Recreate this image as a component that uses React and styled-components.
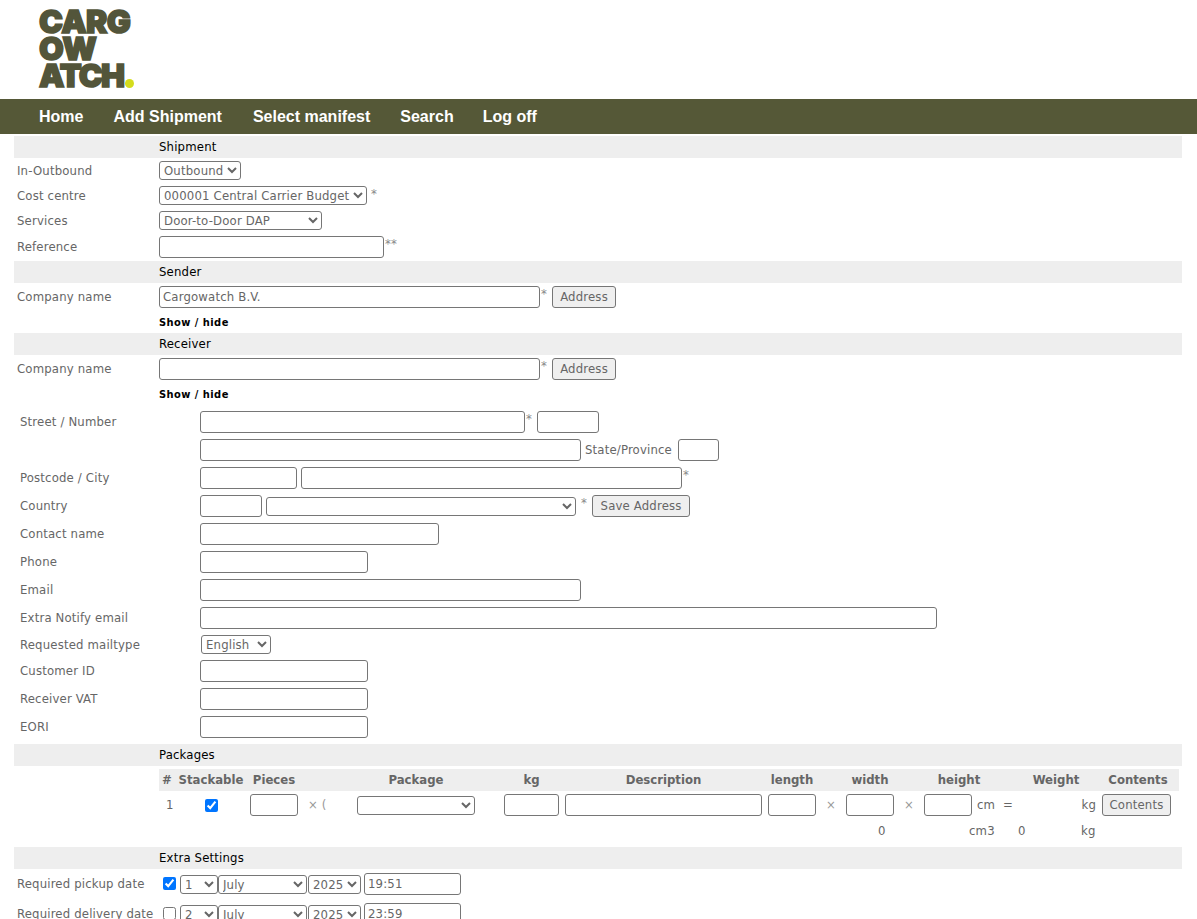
import React from "react";
import styled, { createGlobalStyle } from "styled-components";

const Global = createGlobalStyle`
  html, body { margin: 0; padding: 0; background: #fff; }
  body { font-family: "DejaVu Sans Condensed", "DejaVu Sans", Tahoma, sans-serif; font-stretch: condensed; font-size: 13px; letter-spacing: 0.17px; color: #666; }
  #root { height: 919px; overflow: hidden; }
`;

const Header = styled.header`
  height: 99px;
  box-sizing: border-box;
  padding: 8px 0 0 39px;
`;
const Logo = styled.div`
  font-family: Inter, "Liberation Sans", sans-serif;
  font-weight: 900;
  font-stretch: normal;
  font-size: 32px;
  line-height: 27px;
  color: #53553a;
  -webkit-text-stroke: 1.6px #53553a;
`;
const LogoLine = styled.div`
  height: 27px;
  display: flex;
  align-items: center;
  letter-spacing: ${(p) => p.$ls}px;
`;
const LogoDot = styled.span`
  flex: none;
  width: 9px;
  height: 9px;
  border-radius: 50%;
  background: #d4dc1c;
  margin: 16px 0 0 2px;
`;
const Nav = styled.nav`
  height: 35px;
  background: #555837;
  display: flex;
  align-items: center;
  padding-left: 24px;
  font-family: "Liberation Sans", Arial, sans-serif;
  font-stretch: normal;
  letter-spacing: 0;
`;
const NavLink = styled.a`
  padding: 0 15px;
  color: #fff;
  font-size: 16px;
  font-weight: 700;
  &:nth-child(3) { margin-left: 1px; }
  &:nth-child(4) { margin-right: -1px; }
`;
const Main = styled.main`
  margin: 2px 15px 0 14px;
`;
const Bar = styled.div`
  box-sizing: border-box;
  height: 22px;
  background: #eee;
  color: #000;
  display: flex;
  align-items: center;
  padding: 0 0 2px 145px;
`;
const Label = styled.div`
  width: 142px;
  flex: none;
  white-space: nowrap;
`;
const Row = styled.div`
  display: flex;
  align-items: center;
  height: ${(p) => p.$h || 28}px;
  padding-left: 3px;
  ${Label} { margin-top: ${(p) => (p.$h === 25 ? 0 : -2)}px; }
`;
const Fields = styled.div`
  display: flex;
  align-items: center;
`;
const Nested = styled.div`
  padding: 3px 0 3px 3px;
`;
const NestedLabel = styled(Label)`
  width: 180px;
`;
const Input = styled.input`
  box-sizing: border-box;
  width: ${(p) => p.$w}px;
  height: 22px;
  margin: 0 ${(p) => p.$mr || 0}px 0 ${(p) => p.$ml || 0}px;
  padding: 0 3px 2px;
  border: 1px solid #767676;
  border-radius: 3px;
  background: #fff;
  color: #666;
  font: inherit;
  font-stretch: condensed;
  letter-spacing: inherit;
  outline: none;
`;
const Select = styled.select`
  box-sizing: border-box;
  width: ${(p) => p.$w}px;
  height: 19px;
  margin: 0 ${(p) => p.$mr || 0}px 0 ${(p) => p.$ml || 0}px;
  padding: 0;
  border: 1px solid #767676;
  border-radius: 3px;
  background: #fff;
  color: #666;
  font: inherit;
  font-stretch: condensed;
  letter-spacing: inherit;
`;
const Button = styled.button`
  box-sizing: border-box;
  height: 22px;
  width: ${(p) => p.$w}px;
  margin-left: ${(p) => p.$ml || 0}px;
  padding: 0 0 2px;
  border: 1px solid #767676;
  border-radius: 3px;
  background: #efefef;
  color: #666;
  font: inherit;
  font-stretch: condensed;
  letter-spacing: inherit;
`;
const Req = styled.span`
  font-size: 13px;
  color: #888;
  align-self: flex-start;
  margin: ${(p) => p.$mt ?? 0}px ${(p) => p.$mr || 0}px 0 ${(p) => p.$ml || 0}px;
  line-height: 16px;
`;
const Text = styled.span`
  margin: -2px ${(p) => p.$mr || 0}px 0 ${(p) => p.$ml || 0}px;
  white-space: nowrap;
`;
const Toggle = styled.a`
  margin-left: 142px;
  color: #000;
  font-size: 11px;
  font-weight: 700;
  letter-spacing: 0.45px;
`;
const Table = styled.div`
  margin: 3px 0 0 145px;
  padding-bottom: 6px;
  width: 1020px;
`;
const HeadRow = styled.div`
  box-sizing: border-box;
  display: flex;
  height: 22px;
  padding-bottom: 2px;
  align-items: center;
  background: #eee;
  font-weight: 700;
  letter-spacing: 0;
`;
const BodyRow = styled.div`
  display: flex;
  height: ${(p) => p.$h}px;
  align-items: center;
`;
const Cell = styled.div`
  box-sizing: border-box;
  flex: none;
  width: ${(p) => p.$w}px;
  padding: 0 ${(p) => p.$pr || 0}px 0 ${(p) => p.$pl || 0}px;
  margin-top: ${(p) => (p.$up ? -2 : 0)}px;
  color: ${(p) => (p.$muted ? "#999" : "inherit")};
  white-space: nowrap;
  display: flex;
  align-items: center;
  justify-content: ${(p) => (p.$a === "left" ? "flex-start" : p.$a === "right" ? "flex-end" : "center")};
`;
const Check = styled.input.attrs({ type: "checkbox" })`
  width: 13px;
  height: 13px;
  margin: ${(p) => p.$m || 0};
  accent-color: #0075ff;
`;

const nav = ["Home", "Add Shipment", "Select manifest", "Search", "Log off"];
const noop = () => {};

export default function App() {
  return (
    <>
      <Global />
      <Header>
        <Logo>
          <LogoLine $ls={-0.6}>CARG</LogoLine>
          <LogoLine $ls={0}>OW</LogoLine>
          <LogoLine $ls={-1.8}>ATCH<LogoDot /></LogoLine>
        </Logo>
      </Header>
      <Nav>{nav.map((n) => <NavLink key={n}>{n}</NavLink>)}</Nav>
      <Main>
        <Bar>Shipment</Bar>
        <Row $h={25}><Label>In-Outbound</Label><Select $w={82}><option>Outbound</option></Select></Row>
        <Row $h={25}><Label>Cost centre</Label><Fields><Select $w={208}><option>000001 Central Carrier Budget</option></Select><Req $ml={4}>*</Req></Fields></Row>
        <Row $h={25}><Label>Services</Label><Select $w={163}><option>Door-to-Door DAP</option></Select></Row>
        <Row><Label>Reference</Label><Fields><Input $w={225} /><Req $ml={1}>**</Req></Fields></Row>

        <Bar>Sender</Bar>
        <Row><Label>Company name</Label><Fields><Input $w={381} defaultValue="Cargowatch B.V." /><Req $ml={1}>*</Req><Button $w={64} $ml={5}>Address</Button></Fields></Row>
        <Row $h={22}><Toggle>Show / hide</Toggle></Row>

        <Bar>Receiver</Bar>
        <Row><Label>Company name</Label><Fields><Input $w={381} /><Req $ml={1}>*</Req><Button $w={64} $ml={5}>Address</Button></Fields></Row>
        <Row $h={22}><Toggle>Show / hide</Toggle></Row>

        <Nested>
          <Row><NestedLabel>Street / Number</NestedLabel><Fields><Input $w={325} /><Req $ml={1}>*</Req><Input $w={62} $ml={5} /></Fields></Row>
          <Row><NestedLabel /><Fields><Input $w={381} /><Text $ml={4} $mr={6}>State/Province</Text><Input $w={41} /></Fields></Row>
          <Row><NestedLabel>Postcode / City</NestedLabel><Fields><Input $w={97} /><Input $w={381} $ml={4} /><Req $ml={1}>*</Req></Fields></Row>
          <Row><NestedLabel>Country</NestedLabel><Fields><Input $w={62} /><Select $w={310} $ml={4} /><Req $ml={5}>*</Req><Button $w={98} $ml={5}>Save Address</Button></Fields></Row>
          <Row><NestedLabel>Contact name</NestedLabel><Input $w={239} /></Row>
          <Row><NestedLabel>Phone</NestedLabel><Input $w={168} /></Row>
          <Row><NestedLabel>Email</NestedLabel><Input $w={381} /></Row>
          <Row><NestedLabel>Extra Notify email</NestedLabel><Input $w={737} /></Row>
          <Row $h={25}><NestedLabel>Requested mailtype</NestedLabel><Select $w={70} $ml={1}><option>English</option></Select></Row>
          <Row><NestedLabel>Customer ID</NestedLabel><Input $w={168} /></Row>
          <Row><NestedLabel>Receiver VAT</NestedLabel><Input $w={168} /></Row>
          <Row><NestedLabel>EORI</NestedLabel><Input $w={168} /></Row>
        </Nested>

        <Bar>Packages</Bar>
        <Table>
          <HeadRow>
            <Cell $w={16}>#</Cell>
            <Cell $w={72}>Stackable</Cell>
            <Cell $w={54}>Pieces</Cell>
            <Cell $w={50} />
            <Cell $w={130}>Package</Cell>
            <Cell $w={81} $pl={20}>kg</Cell>
            <Cell $w={203}>Description</Cell>
            <Cell $w={54}>length</Cell>
            <Cell $w={24} />
            <Cell $w={54}>width</Cell>
            <Cell $w={24} />
            <Cell $w={76}>height</Cell>
            <Cell $w={102} $pl={16}>Weight</Cell>
            <Cell $w={78}>Contents</Cell>
          </HeadRow>
          <BodyRow $h={28}>
            <Cell $w={16} $a="left" $pl={7} $up>1</Cell>
            <Cell $w={72}><Check defaultChecked onChange={noop} /></Cell>
            <Cell $w={54}><Input $w={48} /></Cell>
            <Cell $w={50} $a="left" $pl={7} $up $muted>× (</Cell>
            <Cell $w={130}><Select $w={118} /></Cell>
            <Cell $w={81} $pl={20}><Input $w={55} /></Cell>
            <Cell $w={203}><Input $w={197} /></Cell>
            <Cell $w={54}><Input $w={48} /></Cell>
            <Cell $w={24} $up $muted>×</Cell>
            <Cell $w={54}><Input $w={48} /></Cell>
            <Cell $w={24} $up $muted>×</Cell>
            <Cell $w={54}><Input $w={48} /></Cell>
            <Cell $w={38} $a="left" $pl={2} $up>cm&nbsp;&nbsp;=</Cell>
            <Cell $w={86} $a="right" $pr={3} $up>kg</Cell>
            <Cell $w={78} $a="left" $pl={3}><Button $w={69}>Contents</Button></Cell>
          </BodyRow>
          <BodyRow $h={22}>
            <Cell $w={719} $a="right">&nbsp;</Cell>
            <Cell $w={91} $a="left">0</Cell>
            <Cell $w={49} $a="left">cm3</Cell>
            <Cell $w={63} $a="left">0</Cell>
            <Cell $w={30} $a="left">kg</Cell>
          </BodyRow>
        </Table>

        <Bar>Extra Settings</Bar>
        <Row $h={30}>
          <Label>Required pickup date</Label>
          <Fields>
            <Check defaultChecked onChange={noop} $m="0 4px 2px 4px" />
            <Select $w={38}><option>1</option></Select>
            <Select $w={89}><option>July</option></Select>
            <Select $w={53} $ml={1}><option>2025</option></Select>
            <Input $w={97} $ml={3} defaultValue="19:51" />
          </Fields>
        </Row>
        <Row $h={30}>
          <Label>Required delivery date</Label>
          <Fields>
            <Check onChange={noop} $m="0 4px 2px 4px" />
            <Select $w={38}><option>2</option></Select>
            <Select $w={89}><option>July</option></Select>
            <Select $w={53} $ml={1}><option>2025</option></Select>
            <Input $w={97} $ml={3} defaultValue="23:59" />
          </Fields>
        </Row>
      </Main>
    </>
  );
}
